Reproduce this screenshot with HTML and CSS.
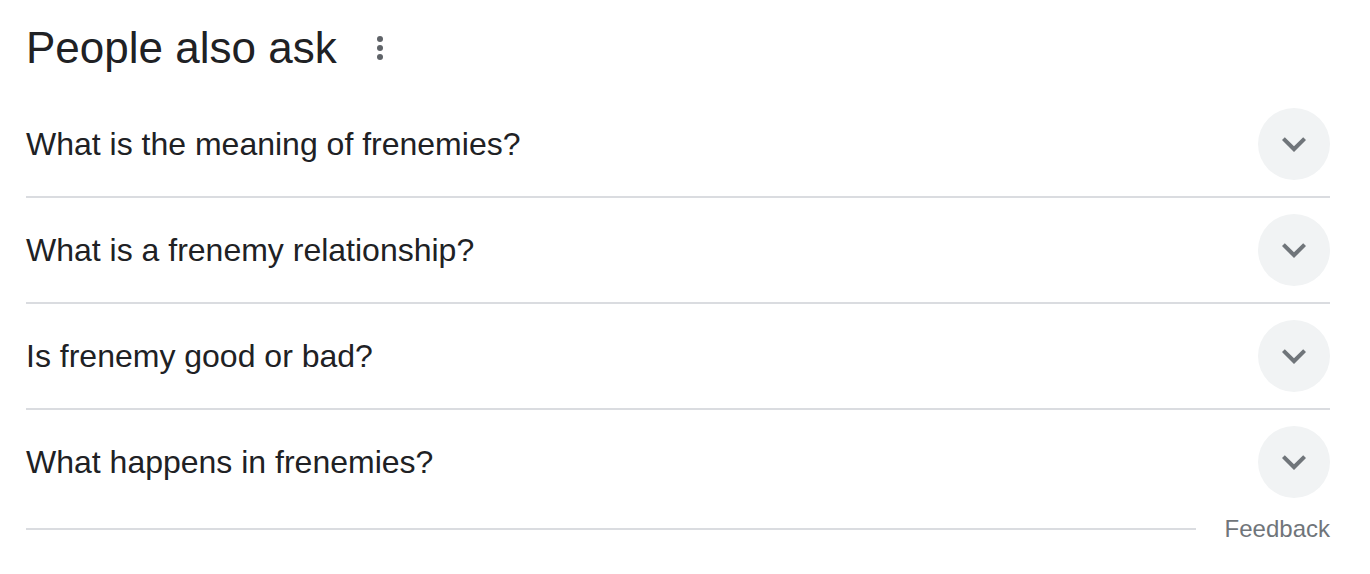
FILE: index.html
```html
<!DOCTYPE html>
<html lang="en">
<head>
<meta charset="utf-8">
<title>People also ask</title>
<link rel="stylesheet" href="styles.css">
</head>
<body>
<div class="paa">
  <div class="paa-header">
    <h2 class="paa-title">People also ask</h2>
    <span class="paa-menu" aria-label="About this result">
      <svg viewBox="0 0 24 24" width="36" height="36"><circle cx="12" cy="6" r="2"/><circle cx="12" cy="12" r="2"/><circle cx="12" cy="18" r="2"/></svg>
    </span>
  </div>
  <div class="paa-list">
    <div class="paa-row">
      <span class="paa-q">What is the meaning of frenemies?</span>
      <span class="paa-btn"><svg viewBox="0 0 24 24" width="48" height="48"><path d="M16.59 8.59L12 13.17 7.41 8.59 6 10l6 6 6-6z"/></svg></span>
    </div>
    <div class="paa-row">
      <span class="paa-q">What is a frenemy relationship?</span>
      <span class="paa-btn"><svg viewBox="0 0 24 24" width="48" height="48"><path d="M16.59 8.59L12 13.17 7.41 8.59 6 10l6 6 6-6z"/></svg></span>
    </div>
    <div class="paa-row">
      <span class="paa-q">Is frenemy good or bad?</span>
      <span class="paa-btn"><svg viewBox="0 0 24 24" width="48" height="48"><path d="M16.59 8.59L12 13.17 7.41 8.59 6 10l6 6 6-6z"/></svg></span>
    </div>
    <div class="paa-row paa-row-last">
      <span class="paa-q">What happens in frenemies?</span>
      <span class="paa-btn"><svg viewBox="0 0 24 24" width="48" height="48"><path d="M16.59 8.59L12 13.17 7.41 8.59 6 10l6 6 6-6z"/></svg></span>
    </div>
  </div>
  <div class="paa-footer">
    <div class="paa-footer-line"></div>
    <span class="paa-feedback">Feedback</span>
  </div>
</div>
</body>
</html>
```
FILE: styles.css
```css
html, body {
  margin: 0;
  padding: 0;
  background: #fff;
}
body {
  font-family: "Liberation Sans", Arial, sans-serif;
  color: #202124;
}
.paa {
  width: 1304px;
  margin-left: 26px;
}
.paa-header {
  display: flex;
  align-items: center;
  padding-top: 20px;
  height: 56px;
  padding-bottom: 16px;
}
.paa-title {
  margin: 0;
  font-size: 44px;
  font-weight: 400;
  line-height: 56px;
  color: #202124;
}
.paa-menu {
  display: flex;
  margin-left: 25px;
  fill: #5f6368;
}
.paa-row {
  display: flex;
  align-items: center;
  justify-content: space-between;
  height: 104px;
  border-bottom: 2px solid #dadce0;
}
.paa-row-last {
  border-bottom: none;
}
.paa-q {
  font-size: 32px;
  line-height: 40px;
  color: #202124;
}
.paa-btn {
  display: flex;
  align-items: center;
  justify-content: center;
  width: 72px;
  height: 72px;
  border-radius: 50%;
  background: #f1f3f4;
  fill: #70757a;
}
.paa-footer {
  display: flex;
  align-items: center;
  height: 30px;
}
.paa-footer-line {
  flex: 1;
  height: 2px;
  background: #dadce0;
  margin-right: 29px;
}
.paa-feedback {
  font-size: 24px;
  line-height: 30px;
  color: #70757a;
}
```
